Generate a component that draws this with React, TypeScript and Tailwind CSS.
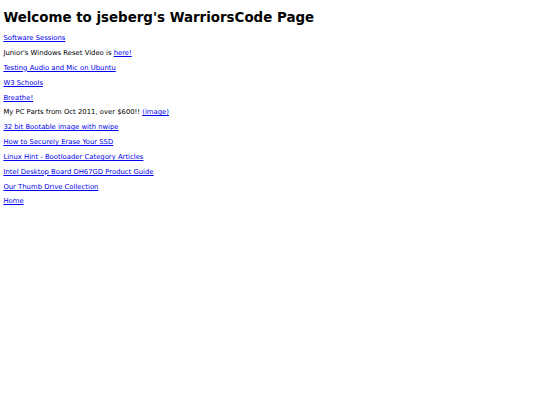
import React from 'react';

type Item = { text?: string; link?: string };

// each line of the page: plain text, a link, or text followed by a link
const items: Item[] = [
  { link: 'Software Sessions' },
  { text: "Junior's Windows Reset Video is ", link: 'here!' },
  { link: 'Testing Audio and Mic on Ubuntu' },
  { link: 'W3 Schools' },
  { link: 'Breathe!' },
  { text: 'My PC Parts from Oct 2011, over $600!! ', link: '(image)' },
  { link: '32 bit Bootable image with nwipe' },
  { link: 'How to Securely Erase Your SSD' },
  { link: 'Linux Hint - Bootloader Category Articles' },
  { link: 'Intel Desktop Board DH67GD Product Guide' },
  { link: 'Our Thumb Drive Collection' },
  { link: 'Home' },
];

export default function App() {
  return (
    <div className="min-h-screen bg-white text-black font-['DejaVu_Sans',sans-serif]">
      <div className="m-[3.4px] text-[6.85px] leading-[normal]">
        <h1 className="text-[13.4px] font-bold leading-[normal] mt-[10.4px] mb-[8.8px]">
          Welcome to jseberg's WarriorsCode Page
        </h1>
        {items.map((it, i) => (
          <p key={i} className="my-[6.85px]">
            {it.text}
            {it.link && (
              <a href="#" className="text-[#0000ee] underline">
                {it.link}
              </a>
            )}
          </p>
        ))}
      </div>
    </div>
  );
}
